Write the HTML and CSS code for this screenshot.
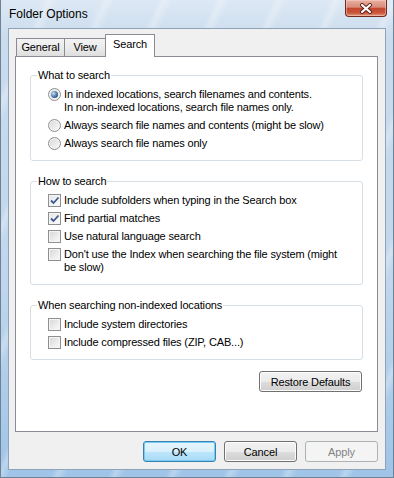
FILE: index.html
```html
<!DOCTYPE html>
<html lang="en">
<head>
  <meta charset="UTF-8">
  <meta name="viewport" content="width=device-width, initial-scale=1.0">
  <title>Folder Options</title>
  <link rel="stylesheet" href="styles.css">
</head>
<body>
  <div class="window">
    <div class="titlebar">
      <span class="title">Folder Options</span>
      <button class="close-btn" aria-label="Close">
        <svg width="14" height="11" viewBox="0 0 14 11">
          <path d="M3 2 L11 9 M11 2 L3 9" stroke="#5a2018" stroke-width="4" stroke-linecap="round" fill="none"/>
          <path d="M3 2 L11 9 M11 2 L3 9" stroke="#ffffff" stroke-width="2.2" stroke-linecap="round" fill="none"/>
        </svg>
      </button>
    </div>

    <div class="client">
      <div class="tabs">
        <div class="tab tab-general">General</div>
        <div class="tab tab-view">View</div>
        <div class="tab tab-active">Search</div>
      </div>

      <div class="tab-panel">
        <fieldset class="group">
          <legend>What to search</legend>
          <div class="options">
            <label class="option">
              <span class="radio checked"></span>
              <span class="option-text">In indexed locations, search filenames and contents.<br>In non-indexed locations, search file names only.</span>
            </label>
            <label class="option">
              <span class="radio"></span>
              <span class="option-text">Always search file names and contents (might be slow)</span>
            </label>
            <label class="option">
              <span class="radio"></span>
              <span class="option-text">Always search file names only</span>
            </label>
          </div>
        </fieldset>

        <fieldset class="group">
          <legend>How to search</legend>
          <div class="options">
            <label class="option">
              <span class="checkbox checked">
                <svg width="11" height="11" viewBox="0 0 11 11"><path d="M2 5.5 L4.5 8 L9.5 2.5" stroke="#3d5a8c" stroke-width="1.8" fill="none"/></svg>
              </span>
              <span class="option-text">Include subfolders when typing in the Search box</span>
            </label>
            <label class="option">
              <span class="checkbox checked">
                <svg width="11" height="11" viewBox="0 0 11 11"><path d="M2 5.5 L4.5 8 L9.5 2.5" stroke="#3d5a8c" stroke-width="1.8" fill="none"/></svg>
              </span>
              <span class="option-text">Find partial matches</span>
            </label>
            <label class="option">
              <span class="checkbox"></span>
              <span class="option-text">Use natural language search</span>
            </label>
            <label class="option">
              <span class="checkbox"></span>
              <span class="option-text">Don't use the Index when searching the file system (might<br>be slow)</span>
            </label>
          </div>
        </fieldset>

        <fieldset class="group">
          <legend>When searching non-indexed locations</legend>
          <div class="options">
            <label class="option">
              <span class="checkbox"></span>
              <span class="option-text">Include system directories</span>
            </label>
            <label class="option">
              <span class="checkbox"></span>
              <span class="option-text">Include compressed files (ZIP, CAB...)</span>
            </label>
          </div>
        </fieldset>

        <div class="panel-actions">
          <button class="btn btn-wide">Restore Defaults</button>
        </div>
      </div>

      <div class="dialog-actions">
        <button class="btn btn-default">OK</button>
        <button class="btn">Cancel</button>
        <button class="btn" disabled>Apply</button>
      </div>
    </div>
  </div>
</body>
</html>
```

FILE: styles.css
```css
:root {
  --client-bg: #f0f0f0;
  --tab-border: #898c95;
  --group-border: #d5dfe5;
  --text-main: #000000;
  --ui-font: "Segoe UI", "Liberation Sans", Arial, sans-serif;
}

* {
  box-sizing: border-box;
  margin: 0;
  padding: 0;
}

body {
  width: 394px;
  height: 478px;
  overflow: hidden;
  font-family: var(--ui-font);
  font-size: 11px;
  letter-spacing: -0.15px;
  color: var(--text-main);
  background: #ffffff;
}

/* window frame */
.window {
  width: 394px;
  height: 478px;
  display: flex;
  flex-direction: column;
  padding: 0 7px 7px 7px;
  border: 1px solid #6f8294;
  border-top: none;
  background:
    repeating-linear-gradient(115deg, rgba(255, 255, 255, 0) 0, rgba(255, 255, 255, 0) 38px, rgba(255, 255, 255, 0.28) 44px, rgba(255, 255, 255, 0) 52px),
    linear-gradient(to bottom, #dde8f4 0, #cadcee 8%, #bfd6ec 60%, #9fc4e8 100%);
}

.titlebar {
  height: 28px;
  display: flex;
  justify-content: space-between;
  align-items: flex-start;
  margin-right: -1px;
}

.title {
  padding-left: 1px;
  font-size: 12px;
  letter-spacing: 0;
  line-height: 28px;
  color: #000;
}

.close-btn {
  width: 42px;
  height: 17px;
  display: flex;
  align-items: center;
  justify-content: center;
  border: 1px solid #6e2a20;
  border-top: none;
  border-radius: 0 0 4px 4px;
  background: linear-gradient(to bottom, #e9b0a2 0, #d98b79 45%, #c2472f 52%, #c9553b 80%, #e39b7c 100%);
  box-shadow: inset 0 0 0 1px rgba(255, 220, 210, 0.45);
}

/* client area */
.client {
  flex: 1;
  display: flex;
  flex-direction: column;
  padding: 5px 7px 7px 6px;
  background-color: var(--client-bg);
  border: 1px solid #8ea3b7;
}

.tabs {
  height: 22px;
  display: flex;
  align-items: flex-end;
  padding-left: 1px;
}

.tab {
  height: 18px;
  display: flex;
  align-items: center;
  justify-content: center;
  border: 1px solid var(--tab-border);
  border-bottom: none;
  background: linear-gradient(to bottom, #f3f3f3 0, #ebebeb 50%, #dedede 100%);
  line-height: 13px;
}

.tab-general {
  width: 49px;
}

.tab-view {
  width: 42px;
  margin-left: -1px;
}

.tab-active {
  position: relative;
  z-index: 1;
  width: 50px;
  height: 23px;
  margin-left: -1px;
  margin-bottom: -1px;
  padding-bottom: 3px;
  background: #ffffff;
}

.tab-panel {
  flex: 1;
  display: flex;
  flex-direction: column;
  gap: 14px;
  padding: 12px 14px 0 14px;
  background-color: #ffffff;
  border: 1px solid var(--tab-border);
}

/* group boxes */
.group {
  padding: 3px 8px 8px 6px;
  border: 1px solid var(--group-border);
  border-radius: 3px;
  min-inline-size: 0;
}

.group legend {
  padding: 0 1px;
  line-height: 13px;
}

.options {
  display: flex;
  flex-direction: column;
  padding-left: 11px;
}

.option {
  display: flex;
  align-items: flex-start;
  gap: 3px;
  padding: 2.5px 0;
  line-height: 13px;
}

.option-text {
  white-space: nowrap;
}

.radio,
.checkbox {
  flex-shrink: 0;
  width: 13px;
  height: 13px;
  border: 1px solid #8e8f8f;
  background: linear-gradient(135deg, #d6d6d6 0, #e9e9e9 50%, #fbfbfb 100%);
  box-shadow: inset 0 0 0 1px #f4f4f4;
}

.radio {
  display: flex;
  align-items: center;
  justify-content: center;
  border-radius: 50%;
}

.radio.checked::after {
  content: "";
  width: 7px;
  height: 7px;
  border-radius: 50%;
  background: radial-gradient(circle at 35% 35%, #cfe3f5 0, #6f9ac4 35%, #254f7d 75%, #1e3f66 100%);
}

.checkbox {
  display: flex;
  align-items: center;
  justify-content: center;
}

.checkbox.checked {
  background: linear-gradient(135deg, #e4e4e4 0, #f1f1f1 50%, #fcfcfc 100%);
}

/* buttons */
.btn {
  height: 21px;
  font-family: var(--ui-font);
  font-size: 11px;
  letter-spacing: -0.15px;
  color: var(--text-main);
  border: 1px solid #707070;
  border-radius: 3px;
  background: linear-gradient(to bottom, #f2f2f2 0, #ebebeb 50%, #dddddd 51%, #cfcfcf 100%);
  box-shadow: inset 0 0 0 1px #fcfcfc;
}

.btn-default {
  border-color: #3c7fb1;
  background: linear-gradient(to bottom, #e8f5fc 0, #d9f0fc 50%, #bee6fd 51%, #a7d9f5 100%);
  box-shadow: inset 0 0 0 1px #74cdf3;
}

.btn:disabled {
  color: #838383;
  border-color: #adb2b5;
  background: #f4f4f4;
  box-shadow: none;
}

.btn-wide {
  width: 103px;
}

.panel-actions {
  display: flex;
  justify-content: flex-end;
  margin-top: -3px;
  padding-right: 1px;
}

.dialog-actions {
  display: flex;
  justify-content: flex-end;
  gap: 8px;
  margin-top: 9px;
}

.dialog-actions .btn {
  width: 73px;
}
```
